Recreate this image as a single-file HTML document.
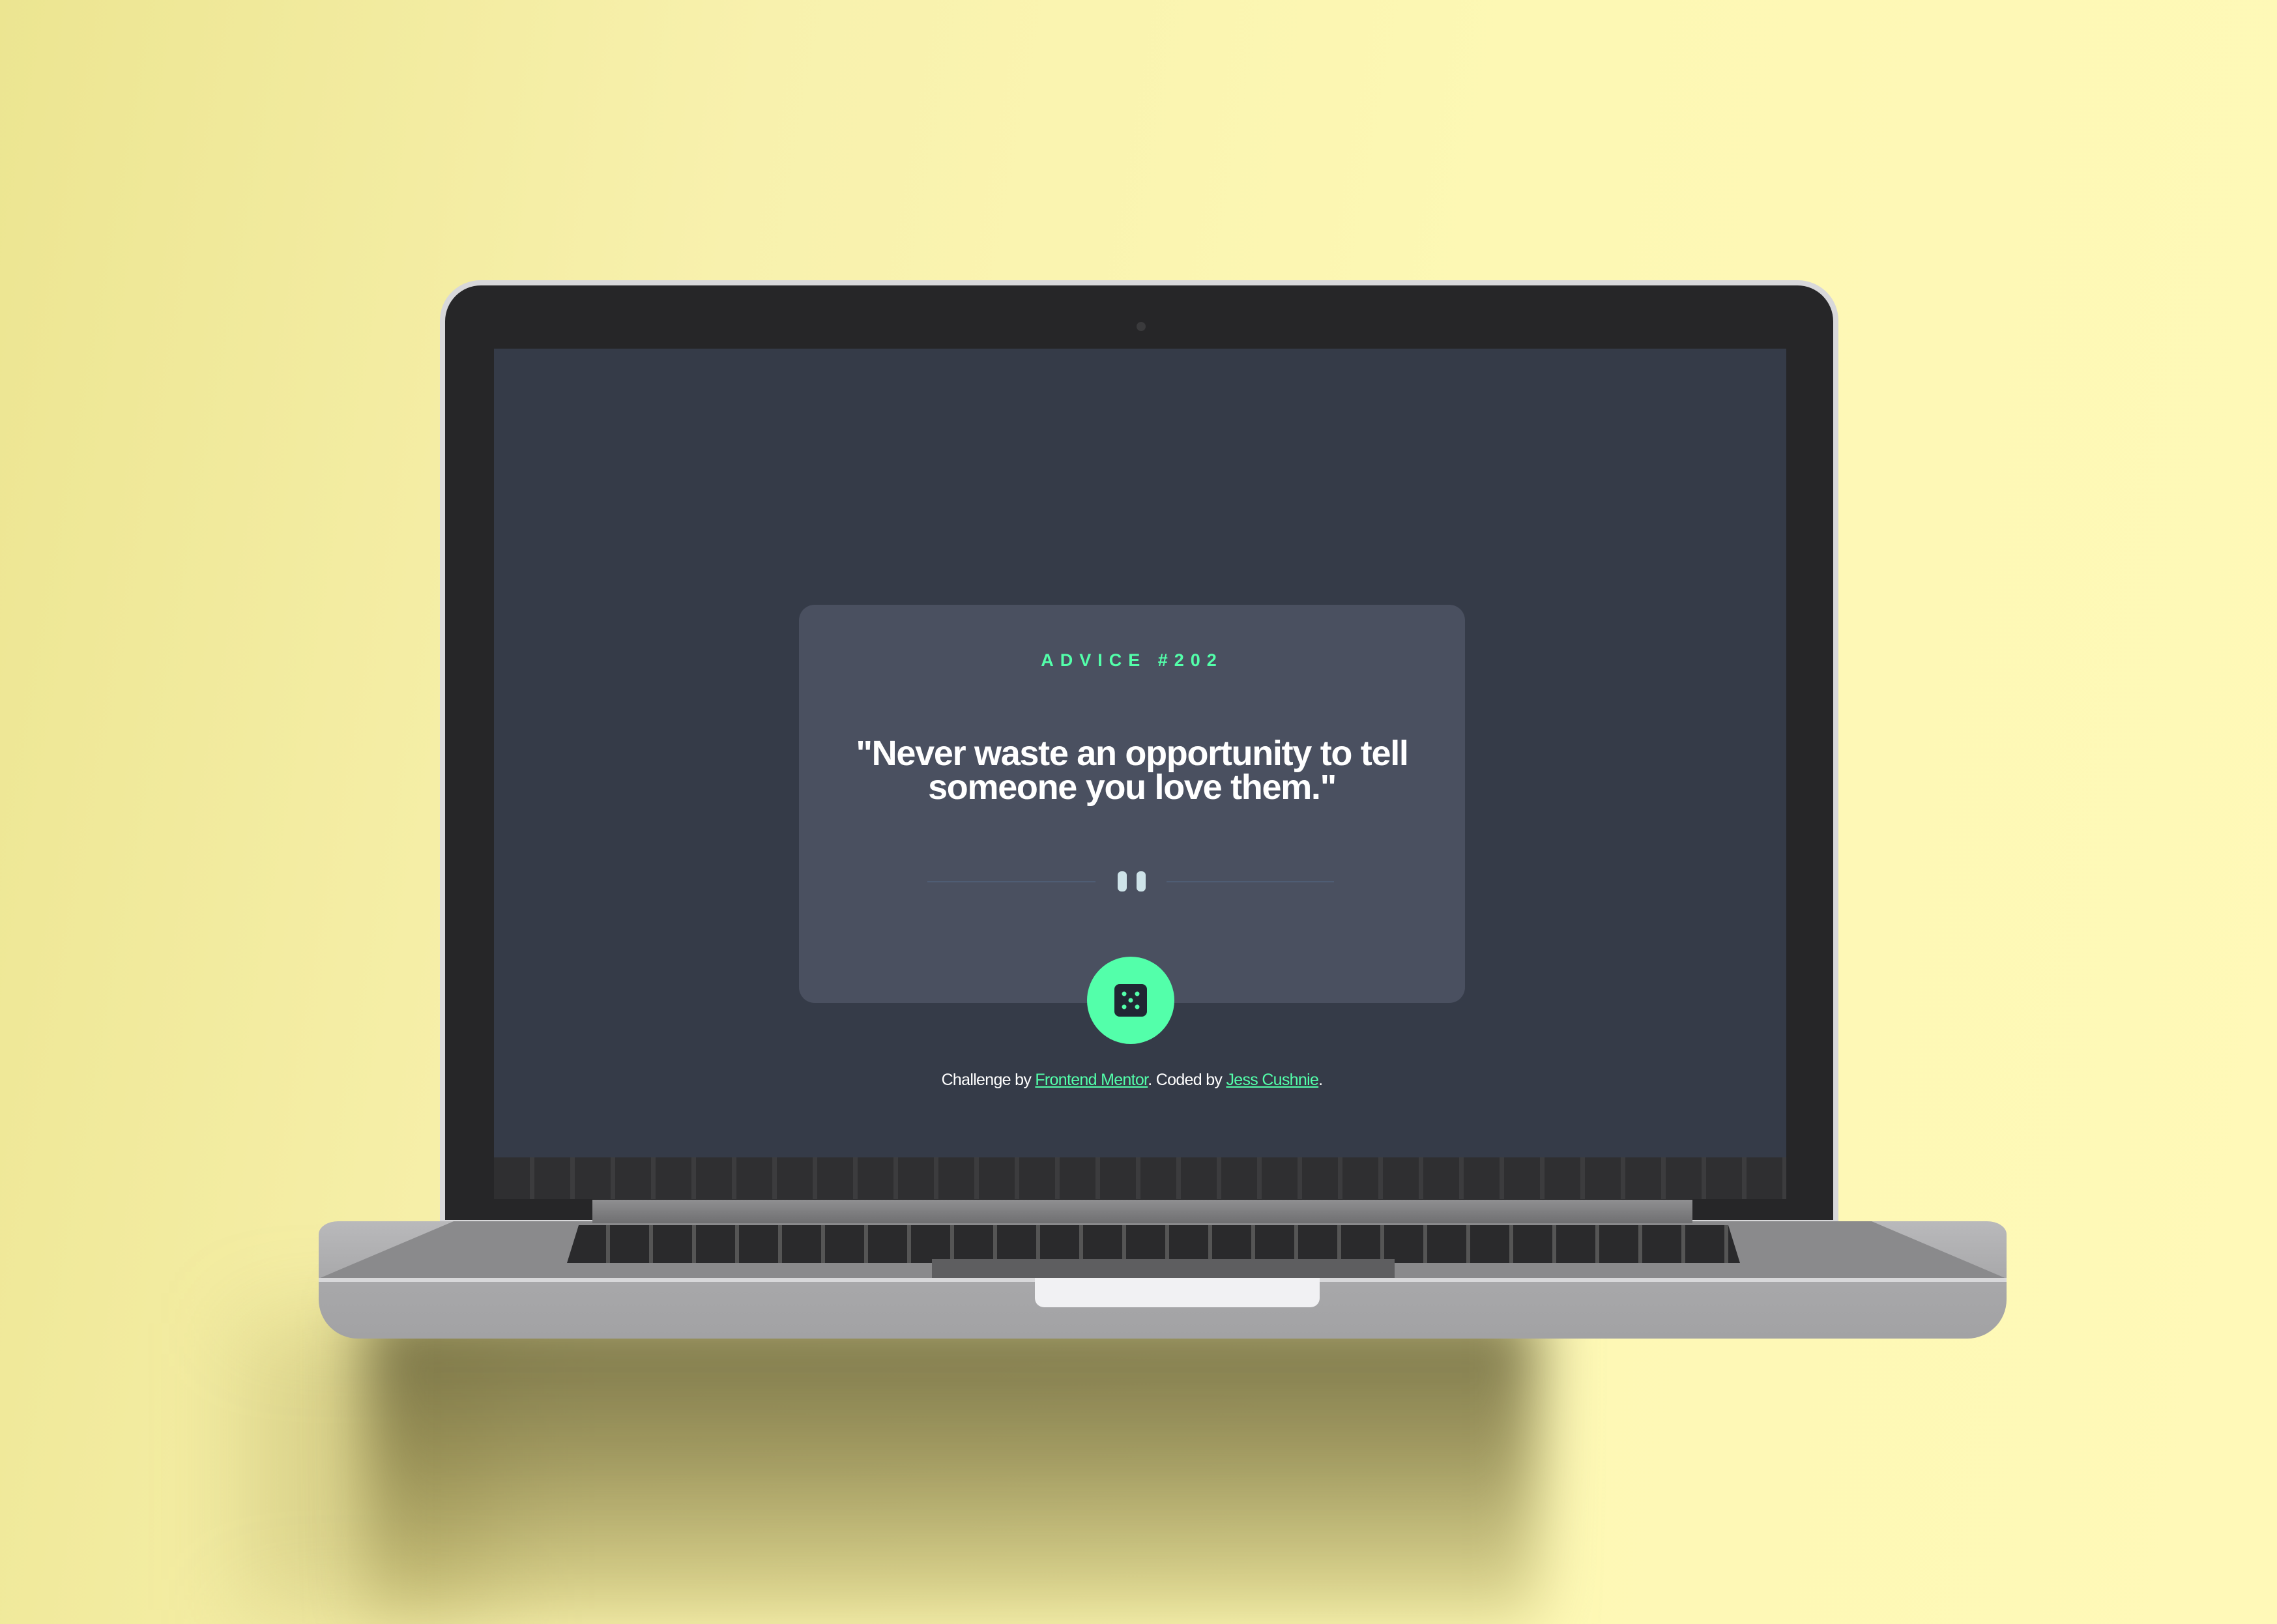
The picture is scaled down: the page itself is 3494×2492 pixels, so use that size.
<!DOCTYPE html>
<html><head><meta charset="utf-8"><style>
*{margin:0;padding:0;box-sizing:border-box}
html{width:3494px;height:2492px;overflow:hidden}
body{width:3494px;height:2492px;overflow:hidden;position:relative;background:linear-gradient(100deg,#ece591 0%,#f8f1ad 30%,#fdf8b4 60%,#fff9b8 100%);font-family:"Liberation Sans",sans-serif}
.abs{position:absolute}
.shadow{left:560px;top:2010px;width:1800px;height:480px;background:linear-gradient(180deg,rgba(105,100,60,.9) 0%,rgba(120,112,60,.7) 45%,rgba(150,140,70,.4) 85%,rgba(170,160,80,.25) 100%);filter:blur(45px)}
.shadow2{left:380px;top:2030px;width:380px;height:440px;background:rgba(160,150,80,.3);filter:blur(70px)}
.lid{left:675px;top:430px;width:2146px;height:1450px;border-radius:62px 62px 0 0;background:#d8d8da;padding:8px}
.bezel{width:100%;height:100%;border-radius:55px 55px 0 0;background:#262628}
.screen{left:758px;top:535px;width:1983px;height:1241px;background:#353b48}
.refl{left:758px;top:1776px;width:1983px;height:64px;background:repeating-linear-gradient(90deg,#2f2f31 0 55px,#3c3c3e 55px 62px)}
.cam{left:1744px;top:494px;width:14px;height:14px;border-radius:50%;background:#3a3a3c}
.hinge{left:909px;top:1841px;width:1688px;height:36px;background:linear-gradient(#8f8f91,#6f6f71)}
.base{left:489px;top:1874px;width:2590px;height:180px;background:linear-gradient(#b9b9bb,#a8a8aa 50%,#a2a2a4);border-radius:30px 30px 60px 60px/20px 20px 60px 60px}
.deck{left:489px;top:1874px;width:2590px;height:88px;background:#8a8a8c;clip-path:polygon(8% 0,92% 0,100% 100%,0 100%)}
.kb{left:870px;top:1880px;width:1800px;height:58px;background:repeating-linear-gradient(90deg,#2a2a2c 0 60px,#555 60px 66px);clip-path:polygon(1% 0,99% 0,100% 100%,0 100%)}
.pad{left:1430px;top:1932px;width:710px;height:30px;background:#5e5e60}
.front{left:489px;top:1961px;width:2590px;height:6px;background:#d8d8da}
.notch{left:1588px;top:1961px;width:437px;height:45px;background:#f1f1f3;border-radius:0 0 14px 14px}
.card{left:1226px;top:928px;width:1022px;height:611px;background:#4a5060;border-radius:24px}
.label{left:1226px;top:998px;width:1022px;text-align:center;color:#53ffaa;font-weight:bold;font-size:27px;letter-spacing:10px}
.quote{left:1240px;top:1130px;width:994px;text-align:center;color:#fff;font-weight:bold;font-size:54px;line-height:52px;letter-spacing:-1.3px}
.line{top:1352px;height:2px;background:#4f5d74}
.bar{top:1337px;width:14px;height:31px;background:#cee3e9;border-radius:6px}
.btn{left:1668px;top:1468px;width:134px;height:134px;border-radius:50%;background:#53ffaa}
.foot{left:1226px;top:1643px;width:1022px;text-align:center;color:#fff;font-size:25px;letter-spacing:-.7px}
.foot span{color:#53ffaa;text-decoration:underline}
</style></head><body>
<div class="abs shadow2"></div>
<div class="abs shadow"></div>
<div class="abs lid"><div class="bezel"></div></div>
<div class="abs cam"></div>
<div class="abs screen"></div>
<div class="abs refl"></div>
<div class="abs base"></div>
<div class="abs deck"></div>
<div class="abs hinge"></div>
<div class="abs kb"></div>
<div class="abs pad"></div>
<div class="abs front"></div>
<div class="abs notch"></div>
<div class="abs card"></div>
<div class="abs label">ADVICE #202</div>
<div class="abs quote">"Never waste an opportunity to tell someone you love them."</div>
<div class="abs line" style="left:1423px;width:258px"></div>
<div class="abs line" style="left:1790px;width:257px"></div>
<div class="abs bar" style="left:1715px"></div>
<div class="abs bar" style="left:1744px"></div>
<div class="abs btn"><svg width="134" height="134" viewBox="0 0 134 134"><rect x="42" y="42" width="50" height="50" rx="8" fill="#202733"/><circle cx="57" cy="57" r="3.5" fill="#53ffaa"/><circle cx="77" cy="57" r="3.5" fill="#53ffaa"/><circle cx="67" cy="67" r="3.5" fill="#53ffaa"/><circle cx="57" cy="77" r="3.5" fill="#53ffaa"/><circle cx="77" cy="77" r="3.5" fill="#53ffaa"/></svg></div>
<div class="abs foot">Challenge by <span>Frontend Mentor</span>. Coded by <span>Jess Cushnie</span>.</div>
</body></html>
